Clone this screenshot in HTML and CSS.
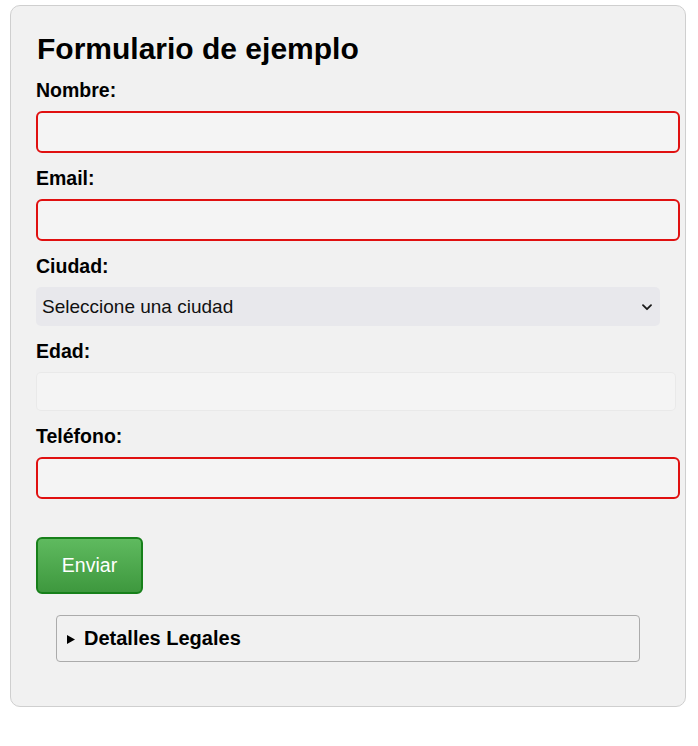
FILE: index.html
```html
<!DOCTYPE html>
<html lang="es">
<head>
<meta charset="utf-8">
<title>Formulario de ejemplo</title>
<link rel="stylesheet" href="styles.css">
</head>
<body>
<div class="card">
  <h1 class="title">Formulario de ejemplo</h1>
  <form class="form">
    <div class="field">
      <label class="label" for="nombre">Nombre:</label>
      <input class="input input-error" id="nombre" type="text">
    </div>
    <div class="field">
      <label class="label" for="email">Email:</label>
      <input class="input input-error" id="email" type="email">
    </div>
    <div class="field">
      <label class="label" for="ciudad">Ciudad:</label>
      <div class="select-wrap">
        <select class="select" id="ciudad">
          <option>Seleccione una ciudad</option>
        </select>
        <svg class="chevron" width="10" height="7" viewBox="0 0 10 7" aria-hidden="true"><path d="M1 1.2 L5 5.2 L9 1.2" fill="none" stroke="#1a1a1a" stroke-width="1.8" stroke-linecap="round" stroke-linejoin="round"/></svg>
      </div>
    </div>
    <div class="field">
      <label class="label" for="edad">Edad:</label>
      <input class="input input-plain" id="edad" type="number">
    </div>
    <div class="field">
      <label class="label" for="telefono">Teléfono:</label>
      <input class="input input-error" id="telefono" type="tel">
    </div>
    <button class="submit" type="button">Enviar</button>
  </form>
  <details class="legal">
    <summary class="legal-summary"><svg class="marker" width="8" height="9" viewBox="0 0 8 9" aria-hidden="true"><polygon points="0,0 8,4.5 0,9" fill="#000"/></svg>Detalles Legales</summary>
  </details>
</div>
</body>
</html>
```

FILE: styles.css
```css
html, body {
  background: #ffffff;
}

body {
  margin: 5px 12px 5px 10px;
  font-family: "Liberation Sans", Arial, sans-serif;
  color: #000;
}

.card {
  background: #f1f1f1;
  border: 1px solid #cfcfcf;
  border-radius: 10px;
  padding: 26px 25px 25px;
}

.title {
  margin: 0 0 13px 1px;
  font-size: 30px;
  line-height: 34px;
  font-weight: bold;
}

.form {
  margin: 0;
}

.field {
  margin-bottom: 14px;
}

.label {
  display: block;
  font-size: 19.5px;
  line-height: 22px;
  font-weight: bold;
  margin-bottom: 10px;
}

.input {
  display: block;
  width: 100%;
  margin: 0;
  font-family: "Liberation Sans", Arial, sans-serif;
  font-size: 18px;
  background: #f4f4f4;
  outline: none;
}

.input-error {
  box-sizing: content-box;
  padding: 0 8px;
  height: 38px;
  border: 2px solid #e01010;
  border-radius: 6px;
}

.input-plain {
  box-sizing: content-box;
  padding: 0 8px;
  height: 39px;
  border: none;
  border-radius: 5px;
  box-shadow: inset 0 0 0 1px #e9e9e9;
}

.select-wrap {
  position: relative;
}

.select {
  display: block;
  width: 100%;
  height: 39px;
  margin: 0;
  padding: 0 30px 0 6px;
  border: none;
  border-radius: 5px;
  background: #e8e8ec;
  color: #111;
  font-family: "Liberation Sans", Arial, sans-serif;
  font-size: 19px;
  -webkit-appearance: none;
  appearance: none;
  outline: none;
}

.chevron {
  position: absolute;
  right: 8px;
  top: 17px;
  pointer-events: none;
}

.submit {
  display: block;
  margin-top: 38px;
  width: 107px;
  height: 57px;
  padding: 0;
  box-sizing: border-box;
  border: 2px solid #17801a;
  border-radius: 6px;
  background: linear-gradient(to bottom, #5fba5f 0%, #3e983e 100%);
  color: #ffffff;
  font-family: "Liberation Sans", Arial, sans-serif;
  font-size: 19.5px;
}

.legal {
  margin: 21px 20px 19px;
  border: 1px solid #ababab;
  border-radius: 4px;
}

.legal-summary {
  display: flex;
  align-items: center;
  gap: 9px;
  list-style: none;
  padding: 11px 10px;
  font-size: 20px;
  line-height: 23px;
  font-weight: bold;
  cursor: pointer;
}

.legal-summary::-webkit-details-marker {
  display: none;
}

.marker {
  flex: none;
  margin-top: 1px;
}
```
